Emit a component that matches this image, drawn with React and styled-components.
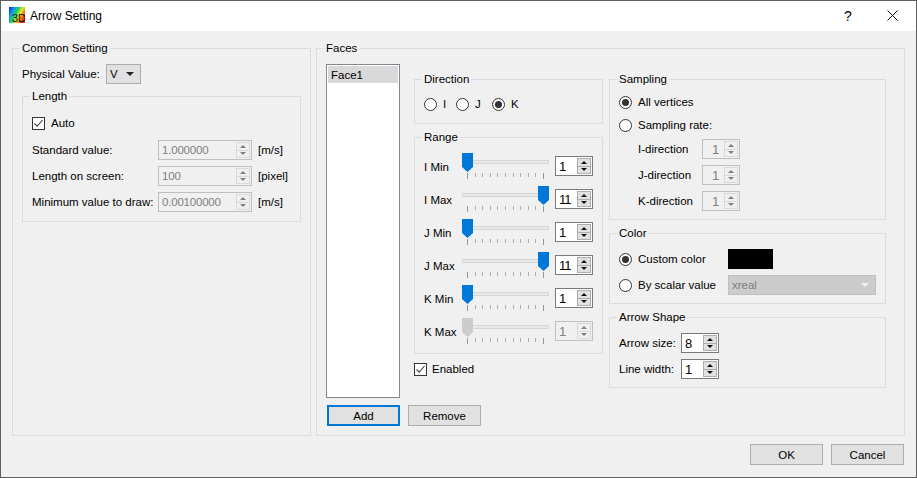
import React from "react";
import styled, { createGlobalStyle } from "styled-components";

const GlobalStyle = createGlobalStyle`
  html, body {
    margin: 0;
    padding: 0;
    background: #f0f0f0;
  }
  * {
    box-sizing: border-box;
  }
`;

const Dialog = styled.div`
  width: 917px;
  height: 478px;
  display: flex;
  flex-direction: column;
  border: 1px solid #5f5f5f;
  background: #f0f0f0;
  color: #000;
  font-family: "Liberation Sans", "Noto Sans", sans-serif;
  font-size: 11.5px;
  line-height: 15px;
  overflow: hidden;
`;
const TitleBar = styled.div`
  height: 30px;
  flex: none;
  display: flex;
  align-items: flex-start;
  padding: 6px 0 0 8px;
  background: #fff;
`;
const TitleText = styled.div`
  margin-left: 5px;
  flex: 1;
  font-size: 12px;
  line-height: 19px;
`;
const HelpMark = styled.div`
  width: 12px;
  margin-right: 33px;
  font-size: 14px;
  line-height: 18px;
  text-align: center;
`;
const CloseIcon = styled.svg`
  width: 11px;
  height: 11px;
  margin: 3px 18px 0 0;
`;
const Body = styled.div`
  flex: 1;
  display: flex;
  gap: 5px;
  padding: 10px 11px 0;
`;
const Footer = styled.div`
  height: 41px;
  flex: none;
  display: flex;
  justify-content: flex-end;
  gap: 8px;
  padding: 8px 12px 0 0;
`;
const Group = styled.fieldset`
  margin: ${({ $mt }) => $mt || 0}px 0 0;
  padding: ${({ $pt }) => $pt || 0}px 9px ${({ $pb }) => $pb || 0}px;
  min-width: 0;
  width: ${({ $w }) => ($w ? `${$w}px` : "auto")};
  border: 1px solid #dcdcdc;
`;
const Legend = styled.legend`
  margin-left: -2px;
  padding: 0 2px;
  height: 15px;
  line-height: 15px;
`;
const Row = styled.div`
  display: flex;
  align-items: center;
  margin-top: ${({ $mt }) => $mt || 0}px;
  margin-left: ${({ $ml }) => $ml || 0}px;
`;
const Label = styled.span`
  flex: none;
  width: ${({ $w }) => $w}px;
  white-space: nowrap;
`;
const Combo = styled.div`
  display: flex;
  align-items: center;
  justify-content: space-between;
  width: ${({ $w }) => $w}px;
  height: 20px;
  padding: 0 6px 0 3px;
  background: ${({ $disabled }) => ($disabled ? "#cccccc" : "#e1e1e1")};
  border: 1px solid ${({ $disabled }) => ($disabled ? "#bfbfbf" : "#adadad")};
  color: ${({ $disabled }) => ($disabled ? "#7d7d7d" : "#000")};
`;
const ComboArrow = styled.i`
  width: 0;
  height: 0;
  border-left: 4px solid transparent;
  border-right: 4px solid transparent;
  border-top: 4px solid ${({ $disabled }) => ($disabled ? "#f0f0f0" : "#222")};
`;
const CheckBox = styled.span`
  flex: none;
  display: flex;
  width: 13px;
  height: 13px;
  border: 1px solid #333;
  background: #fff;
  margin-right: ${({ $gap }) => $gap}px;
`;
const RadioOuter = styled.span`
  flex: none;
  display: flex;
  align-items: center;
  justify-content: center;
  width: 13px;
  height: 13px;
  margin-right: 6px;
  border: 1px solid #333;
  border-radius: 50%;
  background: #fff;
`;
const RadioDot = styled.i`
  width: 7px;
  height: 7px;
  border-radius: 50%;
  background: #333;
`;
const RadioOption = styled.label`
  display: flex;
  align-items: center;
  height: 13px;
  width: ${({ $w }) => ($w ? `${$w}px` : "auto")};
  flex: none;
`;
const SpinBox = styled.div`
  flex: none;
  display: flex;
  align-items: center;
  justify-content: space-between;
  width: ${({ $w }) => $w}px;
  height: 20px;
  margin-top: ${({ $mt }) => $mt || 0}px;
  padding: 0 1px 0 ${({ $pl }) => $pl || 3}px;
  border: 1px solid ${({ $disabled }) => ($disabled ? "#bfbfbf" : "#7a7a7a")};
  background: ${({ $disabled }) => ($disabled ? "#f0f0f0" : "#fff")};
  color: ${({ $disabled }) => ($disabled ? "#808080" : "#000")};
`;
const SpinValue = styled.span`
  font-size: ${({ $tall }) => ($tall ? 13 : 11.5)}px;
  letter-spacing: ${({ $tall }) => ($tall ? -1 : -0.2)}px;
`;
const SpinButtons = styled.div`
  flex: none;
  width: 14px;
  height: 16px;
  display: flex;
  flex-direction: column;
  border: 1px solid ${({ $disabled }) => ($disabled ? "#d9d9d9" : "#adadad")};
  background: ${({ $disabled }) => ($disabled ? "#f0f0f0" : "#e1e1e1")};
`;
const SpinCell = styled.div`
  flex: 1;
  display: flex;
  align-items: center;
  justify-content: center;
  &:first-child {
    border-bottom: 1px solid ${({ $disabled }) => ($disabled ? "#d9d9d9" : "#adadad")};
  }
`;
const SpinArrow = styled.i`
  width: 0;
  height: 0;
  border-left: 3px solid transparent;
  border-right: 3px solid transparent;
  border-${({ $down }) => ($down ? "top" : "bottom")}: 3px solid
    ${({ $disabled }) => ($disabled ? "#808080" : "#111")};
`;
const ListBox = styled.div`
  flex: none;
  width: 74px;
  height: 334px;
  margin-right: 14px;
  padding: 1px;
  border: 1px solid #828790;
  background: #fff;
`;
const ListItem = styled.div`
  height: 17px;
  padding-left: 3px;
  background: #d9d9d9;
  line-height: 19px;
`;
const FacesTop = styled.div`
  display: flex;
  margin-top: 8px;
  height: 334px;
`;
const Column = styled.div`
  flex: none;
  width: ${({ $w }) => $w}px;
  padding-top: 8px;
  margin-right: ${({ $mr }) => $mr || 0}px;
`;
const FacesButtons = styled.div`
  display: flex;
  gap: 8px;
  margin: 7px 0 0 1px;
`;
const PushButton = styled.button`
  width: 73px;
  height: 21px;
  padding: 1px 0 0;
  font: inherit;
  color: #000;
  background: #e1e1e1;
  border: ${({ $primary }) => ($primary ? "2px solid #0078d7" : "1px solid #adadad")};
`;
const SliderRow = styled.div`
  display: flex;
  align-items: flex-start;
  height: 33px;
`;
const SliderLabel = styled.span`
  flex: none;
  width: 38px;
  margin-top: 7px;
  white-space: nowrap;
`;
const Slider = styled.div`
  position: relative;
  flex: none;
  width: 87px;
  margin-right: 6px;
  padding-top: 7px;
`;
const Track = styled.div`
  height: 4px;
  border: 1px solid #d6d6d6;
  background: #e7eaea;
`;
const Thumb = styled.svg`
  position: absolute;
  top: 0;
  left: ${({ $end }) => ($end ? 76 : 0)}px;
  width: 11px;
  height: 19px;
`;
const Ticks = styled.div`
  display: flex;
  justify-content: space-between;
  margin-top: 9px;
  padding: 0 5px;
`;
const Tick = styled.i`
  width: 1px;
  height: ${({ $long }) => ($long ? 6 : 4)}px;
  background: ${({ $long }) => ($long ? "#9a9a8c" : "#b0b0a2")};
`;
const Swatch = styled.div`
  flex: none;
  width: 45px;
  height: 20px;
  background: #000;
`;
const Unit = styled.span`
  margin-left: 6px;
  white-space: nowrap;
`;

const ranges = [
  { label: "I Min", value: 1 },
  { label: "I Max", value: 11, end: true },
  { label: "J Min", value: 1 },
  { label: "J Max", value: 11, end: true },
  { label: "K Min", value: 1 },
  { label: "K Max", value: 1, disabled: true },
];

const Spin = ({ value, width, disabled, pl, mt }) => (
  <SpinBox $w={width} $disabled={disabled} $pl={pl} $mt={mt}>
    <SpinValue $tall={width < 50}>{value}</SpinValue>
    <SpinButtons $disabled={disabled}>
      <SpinCell $disabled={disabled}>
        <SpinArrow $disabled={disabled} />
      </SpinCell>
      <SpinCell $disabled={disabled}>
        <SpinArrow $down $disabled={disabled} />
      </SpinCell>
    </SpinButtons>
  </SpinBox>
);

const Radio = ({ checked, children, w }) => (
  <RadioOption $w={w}>
    <RadioOuter>{checked && <RadioDot />}</RadioOuter>
    <span>{children}</span>
  </RadioOption>
);

const Check = ({ gap }) => (
  <CheckBox $gap={gap}>
    <svg width="11" height="11" viewBox="0 0 11 11">
      <path d="M1.5 5.5 L4.2 8.2 L9.5 2" fill="none" stroke="#444" strokeWidth="1.1" />
    </svg>
  </CheckBox>
);

const AppIcon = () => (
  <svg width="16" height="16" viewBox="0 0 16 16">
    <defs>
      <linearGradient id="rainbow" x1="0" y1="0" x2="1" y2="0.55">
        <stop offset="0" stopColor="#1020e0" />
        <stop offset="0.3" stopColor="#10a0e0" />
        <stop offset="0.5" stopColor="#20d060" />
        <stop offset="0.7" stopColor="#e8e820" />
        <stop offset="1" stopColor="#f03010" />
      </linearGradient>
    </defs>
    <rect width="16" height="16" fill="url(#rainbow)" />
    <text x="3" y="15" fontSize="11" fontFamily="Liberation Sans, sans-serif" fill="#111">
      3D
    </text>
  </svg>
);

const RangeSlider = ({ end, disabled }) => (
  <Slider>
    <Track />
    <Thumb $end={end} viewBox="0 0 11 19">
      <path d="M0 0 H11 V14 L5.5 19 L0 14 Z" fill={disabled ? "#cccccc" : "#0078d7"} />
    </Thumb>
    <Ticks>
      {Array.from({ length: 11 }, (_, i) => (
        <Tick key={i} $long={i === 0 || i === 10} />
      ))}
    </Ticks>
  </Slider>
);

export default function App() {
  return (
    <>
      <GlobalStyle />
      <Dialog>
        <TitleBar>
          <AppIcon />
          <TitleText>Arrow Setting</TitleText>
          <HelpMark>?</HelpMark>
          <CloseIcon viewBox="0 0 11 11">
            <path d="M0.5 0.5 L10.5 10.5 M10.5 0.5 L0.5 10.5" stroke="#111" strokeWidth="1" fill="none" />
          </CloseIcon>
        </TitleBar>

        <Body>
          <Group $w={299}>
            <Legend>Common Setting</Legend>
            <Row $mt={8}>
              <Label $w={84}>Physical Value:</Label>
              <Combo $w={35}>
                <span>V</span>
                <ComboArrow />
              </Combo>
            </Row>
            <Group $mt={5} $pb={9}>
              <Legend>Length</Legend>
              <Row $mt={12}>
                <Check gap={6} />
                <span>Auto</span>
              </Row>
              <Row $mt={9}>
                <Label $w={126}>Standard value:</Label>
                <Spin value="1.000000" width={94} disabled />
                <Unit>[m/s]</Unit>
              </Row>
              <Row $mt={6}>
                <Label $w={126}>Length on screen:</Label>
                <Spin value="100" width={94} disabled />
                <Unit>[pixel]</Unit>
              </Row>
              <Row $mt={6}>
                <Label $w={126}>Minimum value to draw:</Label>
                <Spin value="0.00100000" width={94} disabled />
                <Unit>[m/s]</Unit>
              </Row>
            </Group>
          </Group>

          <Group $w={589}>
            <Legend>Faces</Legend>
            <FacesTop>
              <ListBox>
                <ListItem>Face1</ListItem>
              </ListBox>

              <Column $w={189} $mr={6}>
                <Group $pt={11} $pb={12}>
                  <Legend>Direction</Legend>
                  <Row>
                    <Radio w={32}>I</Radio>
                    <Radio w={36}>J</Radio>
                    <Radio checked>K</Radio>
                  </Row>
                </Group>
                <Group $mt={6} $pt={8} $pb={2}>
                  <Legend>Range</Legend>
                  {ranges.map((r) => (
                    <SliderRow key={r.label}>
                      <SliderLabel>{r.label}</SliderLabel>
                      <RangeSlider end={r.end} disabled={r.disabled} />
                      <Spin value={r.value} width={38} disabled={r.disabled} mt={3} />
                    </SliderRow>
                  ))}
                </Group>
                <Row $mt={8}>
                  <Check gap={5} />
                  <span>Enabled</span>
                </Row>
              </Column>

              <Column $w={277}>
                <Group $pt={9} $pb={8}>
                  <Legend>Sampling</Legend>
                  <Radio checked>All vertices</Radio>
                  <Row $mt={10}>
                    <Radio>Sampling rate:</Radio>
                  </Row>
                  <Row $mt={7} $ml={19}>
                    <Label $w={64}>I-direction</Label>
                    <Spin value={1} width={38} disabled pl={9} />
                  </Row>
                  <Row $mt={6} $ml={19}>
                    <Label $w={64}>J-direction</Label>
                    <Spin value={1} width={38} disabled pl={9} />
                  </Row>
                  <Row $mt={6} $ml={19}>
                    <Label $w={64}>K-direction</Label>
                    <Spin value={1} width={38} disabled pl={9} />
                  </Row>
                </Group>
                <Group $mt={6} $pt={8} $pb={8}>
                  <Legend>Color</Legend>
                  <Row>
                    <Radio w={109} checked>Custom color</Radio>
                    <Swatch />
                  </Row>
                  <Row $mt={6}>
                    <Radio w={109}>By scalar value</Radio>
                    <Combo $w={148} $disabled>
                      <span>xreal</span>
                      <ComboArrow $disabled />
                    </Combo>
                  </Row>
                </Group>
                <Group $mt={6} $pt={8} $pb={8}>
                  <Legend>Arrow Shape</Legend>
                  <Row>
                    <Label $w={62}>Arrow size:</Label>
                    <Spin value={8} width={38} />
                  </Row>
                  <Row $mt={6}>
                    <Label $w={62}>Line width:</Label>
                    <Spin value={1} width={38} />
                  </Row>
                </Group>
              </Column>
            </FacesTop>
            <FacesButtons>
              <PushButton $primary>Add</PushButton>
              <PushButton>Remove</PushButton>
            </FacesButtons>
          </Group>
        </Body>

        <Footer>
          <PushButton>OK</PushButton>
          <PushButton>Cancel</PushButton>
        </Footer>
      </Dialog>
    </>
  );
}
